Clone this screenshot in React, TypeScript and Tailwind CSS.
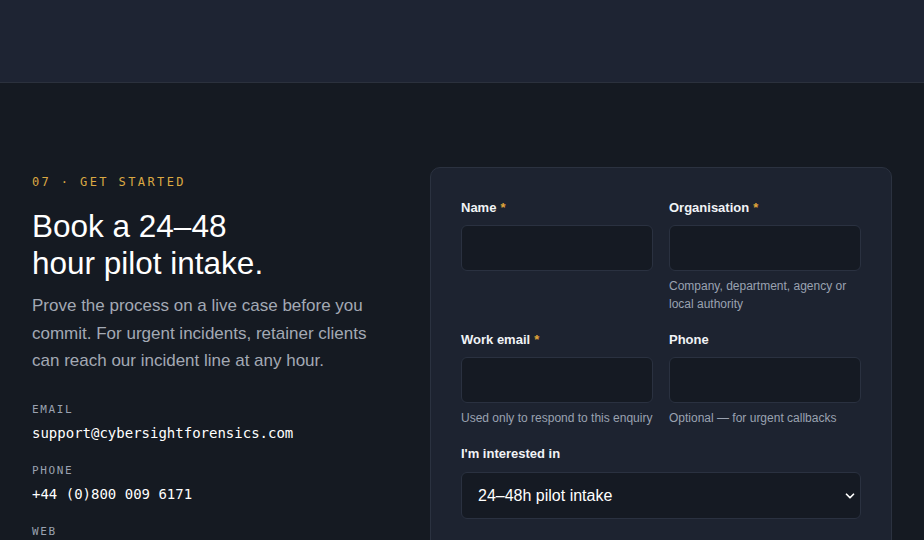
import { ChevronDown } from 'lucide-react'

const sans = { fontFamily: '"Liberation Sans", Arial, sans-serif' }
const mono = { fontFamily: '"DejaVu Sans Mono", "Liberation Mono", monospace' }

function Field({ label, required, hint }: { label: string; required?: boolean; hint?: string }) {
  return (
    <div className="flex flex-col">
      <label className="text-[13px] font-bold leading-[18px] text-[#f1f3f6]">
        {label}
        {required && <span className="ml-1 text-[#e0a63a]">*</span>}
      </label>
      <input className="mt-[8px] h-[46px] w-full rounded-md border border-[#2a3140] bg-[#151a23] px-3 text-sm text-white outline-none" />
      {hint && <p className="mt-[6px] text-[12px] leading-[18px] text-[#9aa2b0]">{hint}</p>}
    </div>
  )
}

export default function App() {
  return (
    <div className="min-h-screen bg-[#151a22]" style={sans}>
      <header className="h-[83px] border-b border-[#2b313d] bg-[#1e2433]" />

      <section className="flex gap-[56px] px-[32px] pt-[91px]">
        <div className="w-[342px] shrink-0">
          <p className="text-[12px] leading-[16px] tracking-[0.2em] text-[#dba843]" style={mono}>
            07 · GET STARTED
          </p>
          <h2 className="mt-[18px] text-[31.5px] leading-[37px] text-white">
            Book a 24–48
            <br />
            hour pilot intake.
          </h2>
          <p className="mt-[10px] text-[17px] leading-[27.5px] text-[#a3a9b4]">
            Prove the process on a live case before you commit. For urgent incidents, retainer clients can reach our incident line at any hour.
          </p>

          <dl className="mt-[27px] space-y-[20px]" style={mono}>
            <div>
              <dt className="text-[11px] leading-[16px] tracking-[0.15em] text-[#9aa2b0]">EMAIL</dt>
              <dd className="mt-[5px] text-[14px] leading-[20px] text-white">support@cybersightforensics.com</dd>
            </div>
            <div>
              <dt className="text-[11px] leading-[16px] tracking-[0.15em] text-[#9aa2b0]">PHONE</dt>
              <dd className="mt-[5px] text-[14px] leading-[20px] text-white">+44 (0)800 009 6171</dd>
            </div>
            <div>
              <dt className="text-[11px] leading-[16px] tracking-[0.15em] text-[#9aa2b0]">WEB</dt>
              <dd className="mt-[5px] text-[14px] leading-[20px] text-white">cybersightforensics.com</dd>
            </div>
          </dl>
        </div>

        <form className="-mt-[7px] w-[462px] shrink-0 self-start rounded-[10px] border border-[#2b3240] bg-[#1d2330] px-[30px] pt-[31px] pb-8">
          <div className="grid grid-cols-2 gap-x-4 gap-y-[18px]">
            <Field label="Name" required />
            <Field label="Organisation" required hint="Company, department, agency or local authority" />
            <Field label="Work email" required hint="Used only to respond to this enquiry" />
            <Field label="Phone" hint="Optional — for urgent callbacks" />
          </div>

          <div className="mt-[18px] flex flex-col">
            <label className="text-[13px] font-bold leading-[18px] text-[#f1f3f6]">I'm interested in</label>
            <div className="relative mt-[9px]">
              <select className="h-[47px] w-full appearance-none rounded-md border border-[#2a3140] bg-[#151a23] pl-[16px] text-[16px] text-white outline-none">
                <option>24–48h pilot intake</option>
              </select>
              <ChevronDown className="pointer-events-none absolute right-[4px] top-1/2 h-[14px] w-[14px] -translate-y-1/2 text-white" strokeWidth={3} />
            </div>
          </div>
        </form>
      </section>
    </div>
  )
}
